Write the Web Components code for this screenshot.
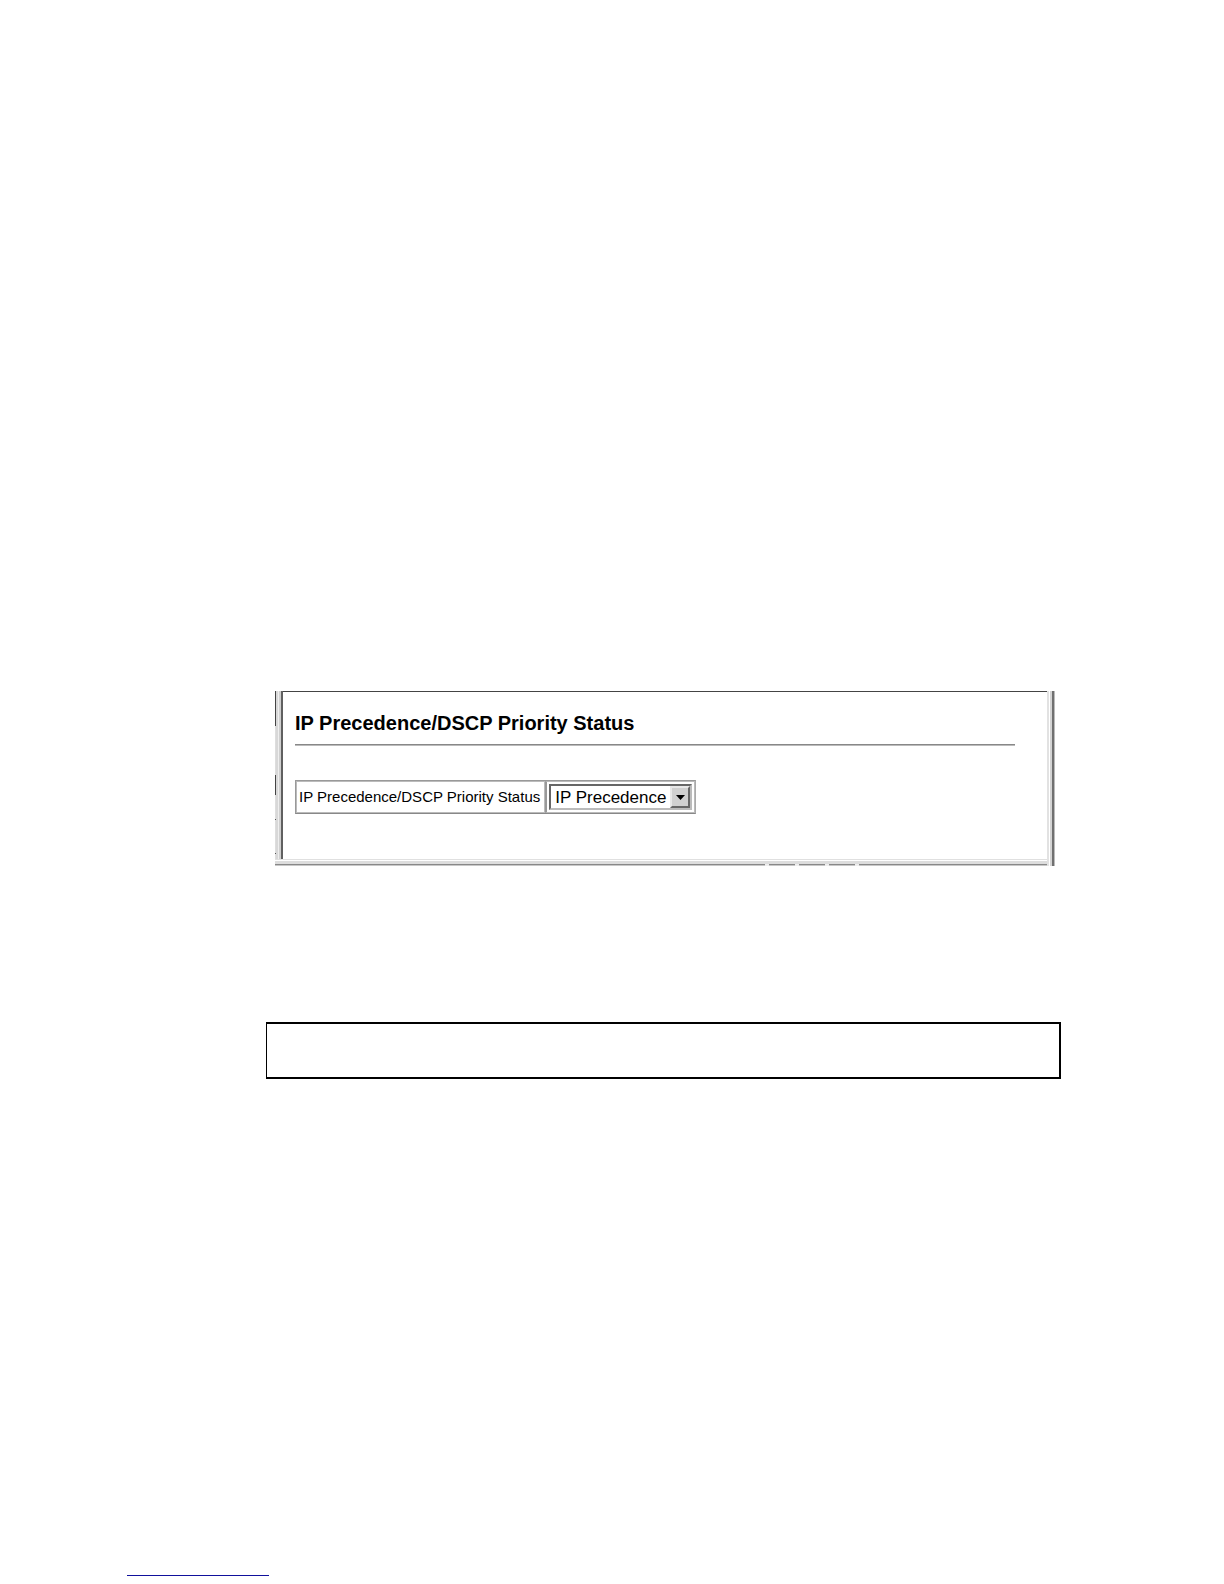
<!DOCTYPE html>
<html lang="en">
<head>
<meta charset="utf-8">
<title>IP Precedence/DSCP Priority Status</title>
<style>
    body {
        margin: 0;
        background: #fff;
        color: #000;
        font-family: "Liberation Sans", Arial, sans-serif;
    }
</style>
</head>
<body>
<manual-page>
    <frame-panel>
        <priority-status></priority-status>
    </frame-panel>
    <command-box slot="command"></command-box>
    <footer-link slot="footer"></footer-link>
</manual-page>

<script>
class ManualPage extends HTMLElement {
    constructor() {
        super();
        this.attachShadow({ mode: "open" });
        this.shadowRoot.innerHTML = `
        <style>
            :host {
                display: block;
                padding: 691px 163px 0 127px;
            }
            .figure {
                margin: 0 6px 0 148px;
            }
            .command {
                margin: 156px 0 0 139px;
            }
            .footer {
                margin-top: 496px;
                padding-bottom: 9px;
            }
        </style>
        <main class="figure"><slot></slot></main>
        <div class="command"><slot name="command"></slot></div>
        <footer class="footer"><slot name="footer"></slot></footer>
        `;
    }
}

class FramePanel extends HTMLElement {
    constructor() {
        super();
        this.attachShadow({ mode: "open" });
        this.shadowRoot.innerHTML = `
        <style>
            :host {
                display: grid;
                grid-template-columns: 8px 1fr 8px;
                grid-template-rows: auto 7px;
            }
            .left {
                display: grid;
                grid-template-columns: 1px 5px 2px;
                background: linear-gradient(90deg, #fff 1px, #d8d8d8 1px 3px, #efefef 3px 4px, #d0d0d0 4px 6px, #606060 6px);
            }
            /* slivers of the neighbouring frame */
            .edge {
                background: linear-gradient(#444 35px, #ddd 35px 84px, #444 84px 104px, #ddd 104px 128px, #555 128px 129px, #ddd 129px 162px, #555 162px 163px, #ddd 163px);
            }
            .content {
                border-top: 1px solid #444;
                padding: 17px 32px 45px 12px;
            }
            .right {
                grid-row: 1 / 3;
                grid-column: 3;
                background: linear-gradient(90deg, #e2e2e2 2px, #fff 2px 3px, #d4d4d4 3px 5px, #707070 5px 7px, #bbb 7px);
            }
            .bottom {
                grid-column: 1 / 3;
                background: linear-gradient(#e0e0e0 1px, #fff 1px 2px, #ddd 2px 5px, #888 5px 6px, #c8c8c8 6px);
            }
            .ticks {
                display: flex;
                justify-content: flex-end;
                align-items: flex-end;
                gap: 26px;
                padding-right: 188px;
            }
            .ticks i {
                width: 4px;
                height: 2px;
                background: #eee;
            }
        </style>
        <div class="left"><div class="edge"></div></div>
        <div class="content"><slot></slot></div>
        <div class="right"></div>
        <div class="bottom ticks"><i></i><i></i><i></i><i></i></div>
        `;
    }
}

class PriorityStatus extends HTMLElement {
    constructor() {
        super();
        this.attachShadow({ mode: "open" });
        this.shadowRoot.innerHTML = `
        <style>
            :host {
                display: block;
            }
            h1 {
                margin: 0;
                font-size: 20px;
                line-height: 28px;
                font-weight: bold;
            }
            hr {
                height: 2px;
                margin: 7px 0 34px;
                border: 0;
                background: linear-gradient(#888 1px, #bbb 1px);
            }
            table {
                border-collapse: separate;
                border-spacing: 0;
                border: 1px solid #999;
                border-right-color: #aaa;
                border-bottom-color: #888;
            }
            th, td {
                padding: 2px;
                border: 1px solid #bbb;
                font-weight: normal;
                text-align: left;
                white-space: nowrap;
            }
            th {
                padding-right: 4px;
                font-size: 15px;
                line-height: 20px;
            }
            td {
                border-left: 2px solid #999;
            }
            .select {
                display: grid;
                grid-template-columns: 1fr 20px;
                border: 2px solid #666;
                border-right-color: #bbb;
                border-bottom-color: #bbb;
                height: 22px;
            }
            select {
                grid-area: 1 / 1 / 2 / 3;
                appearance: none;
                width: 139px;
                height: 22px;
                margin: 0;
                padding: 0 20px 0 4px;
                border: 0;
                border-radius: 0;
                background: #fff;
                color: #000;
                font: 17px "Liberation Sans", Arial, sans-serif;
            }
            .arrow {
                grid-area: 1 / 2;
                display: grid;
                place-items: center;
                border: 2px solid #666;
                border-top-color: #e8e8e8;
                border-left-color: #e8e8e8;
                background: #d0d0d0;
                pointer-events: none;
            }
        </style>
        <h1>IP Precedence/DSCP Priority Status</h1>
        <hr>
        <table>
            <tr>
                <th scope="row"><label for="status">IP Precedence/DSCP Priority Status</label></th>
                <td>
                    <div class="select">
                        <select id="status">
                            <option>Disabled</option>
                            <option selected>IP Precedence</option>
                            <option>IP DSCP</option>
                        </select>
                        <span class="arrow">
                            <svg width="9" height="5" viewBox="0 0 9 5"><path d="M0 0h9L4.500 5z"/></svg>
                        </span>
                    </div>
                </td>
            </tr>
        </table>
        `;
    }
}

class CommandBox extends HTMLElement {
    constructor() {
        super();
        this.attachShadow({ mode: "open" });
        this.shadowRoot.innerHTML = `
        <style>
            :host {
                display: block;
                padding: 27px 0 26px;
                border: 2px solid #000;
                border-left-width: 1px;
            }
        </style>
        <slot></slot>
        `;
    }
}

class FooterLink extends HTMLElement {
    constructor() {
        super();
        this.attachShadow({ mode: "open" });
        this.shadowRoot.innerHTML = `
        <style>
            :host {
                display: block;
            }
            a {
                display: block;
                width: 142px;
                border-bottom: 1px solid #11119c;
            }
        </style>
        <a href="#" aria-label="Top of page"></a>
        `;
    }
}

customElements.define("manual-page", ManualPage);
customElements.define("frame-panel", FramePanel);
customElements.define("priority-status", PriorityStatus);
customElements.define("command-box", CommandBox);
customElements.define("footer-link", FooterLink);
</script>
</body>
</html>
